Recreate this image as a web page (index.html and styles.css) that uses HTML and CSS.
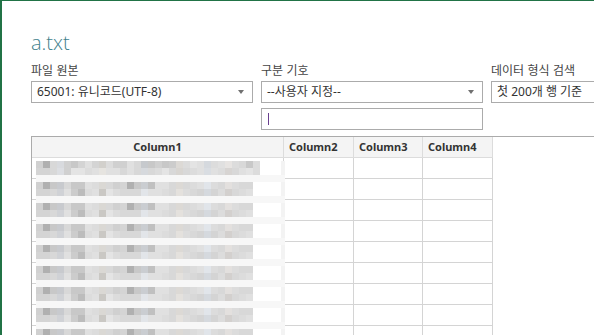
FILE: index.html
```html
<!DOCTYPE html>
<html lang="ko">
<head>
<meta charset="utf-8">
<title>a.txt</title>
<link rel="stylesheet" href="styles.css">
</head>
<body>
<div class="frame">
  <h1 class="title">a.txt</h1>
  <div class="fields">
    <div class="field">
      <div class="label">파일 원본</div>
      <div class="select"><span class="value">65001: 유니코드(UTF-8)</span><span class="arrow"></span></div>
    </div>
    <div class="field">
      <div class="label">구분 기호</div>
      <div class="select"><span class="value">--사용자 지정--</span><span class="arrow"></span></div>
      <div class="input"><span class="caret"></span></div>
    </div>
    <div class="field">
      <div class="label">데이터 형식 검색</div>
      <div class="select"><span class="value">첫 200개 행 기준</span></div>
    </div>
  </div>
  <div class="grid-wrap">
    <div class="grid" id="grid">
      <div class="hcell center">Column1</div>
      <div class="hcell">Column2</div>
      <div class="hcell">Column3</div>
      <div class="hcell">Column4</div>
    </div>
    <div class="blur" id="blur"></div>
  </div>
</div>
<script src="script.js"></script>
</body>
</html>
```

FILE: styles.css
```css
* { box-sizing: border-box; }
html, body { margin: 0; padding: 0; background: #fff; overflow: hidden; }
body {
  width: 594px;
  height: 335px;
  font-family: "Noto Sans", "Noto Sans CJK KR", sans-serif;
  color: #444;
}
.frame {
  height: 335px;
  border-left: 2px solid #217346;
  border-top: 1px solid #217346;
  padding: 0 0 0 29px;
  overflow: hidden;
}
.title {
  margin: 0 0 2px;
  padding-top: 27px;
  font-size: 20px;
  line-height: 30px;
  font-weight: 300;
  color: #3f7f8c;
  font-family: "Open Sans", "Noto Sans", sans-serif;
}
.fields {
  display: flex;
  gap: 8px;
  white-space: nowrap;
}
.field {
  width: 222px;
  flex: none;
  display: flex;
  flex-direction: column;
}
.label {
  font-size: 12px;
  line-height: 16px;
  height: 18px;
  padding-top: 2px;
  margin-bottom: 3px;
  color: #444;
  font-family: "Noto Sans CJK KR", "Noto Sans", sans-serif;
}
.select, .input {
  height: 22px;
  border: 1px solid #ababab;
  display: flex;
  align-items: center;
  padding: 0 8px 0 5px;
  font-size: 12px;
  color: #333;
  font-family: "Noto Sans", "Noto Sans CJK KR", sans-serif;
}
.select .value { flex: 1; line-height: 20px; }
.arrow {
  width: 0; height: 0;
  border-left: 3.5px solid transparent;
  border-right: 3.5px solid transparent;
  border-top: 4px solid #707070;
}
.input { margin-top: 5px; padding-left: 6px; }
.caret {
  width: 1px;
  height: 12px;
  background: #6a3f8f;
}
.grid-wrap {
  position: relative;
  margin-top: 6px;
  margin-right: -10px;
  border-top: 1px solid #ababab;
  border-left: 1px solid #ababab;
  height: 200px;
}
.grid {
  display: grid;
  grid-template-columns: 252px 70px 69px 70px;
  grid-auto-rows: 21px;
  width: 461px;
}
.hcell, .cell {
  border-right: 1px solid #d4d4d4;
  border-bottom: 1px solid #d4d4d4;
}
.hcell {
  background: #f4f4f4;
  font-size: 11px;
  font-weight: 700;
  color: #333;
  line-height: 20px;
  padding-left: 5px;
  border-color: #dcdcdc;
}
.hcell.center { text-align: center; padding-left: 0; }
.blur {
  position: absolute;
  left: 4px;
  top: 24px;
  width: 249px;
  display: flex;
  flex-direction: column;
}
.brow {
  height: 21px;
  display: flex;
  flex-direction: column;
  background: linear-gradient(to right, transparent 245px, #f3f3f3 245px);
}
.bline { height: 7px; display: flex; }
.bgap { height: 7px; background: #f7f7f7; }
.blk { width: 7px; height: 7px; flex: none; }
```

FILE: script.js
```js
(function () {
  var grid = document.getElementById('grid');
  for (var r = 0; r < 9; r++) {
    for (var c = 0; c < 4; c++) {
      var d = document.createElement('div');
      d.className = 'cell';
      grid.appendChild(d);
    }
  }
  var top1 = ['d0','b0','d8','d8','d0','c8','d4','e0','d4','d0','dc','d0','d0','e0','d8','c8','c8','d0','c8','cc','d8','dc','e4','e0','d8','dc','e0','e4','dc','d8','c8','dc'];
  var bot1 = ['d4','d4','d8','dc','d0','e4','e4','dc','e0','e4','e0','e0','d8','e0','d8','d8','d8','dc','e4','d8','d4','d8','dc','e0','dc','e0','dc','d4','d8','e0','e4','dc'];
  var top2 = ['d0','b0','c8','c8','d8','c8','c8','e0','dc','d8','d8','d0','d4','b0','c8','cc','c0','e0','e0','d8','d8','d8','dc','e0','e4','dc','d8','e0','dc','d8','d8'];
  var bot2 = ['d4','d4','d8','d0','e0','cc','bc','dc','e0','c8','e4','dc','d8','d8','d8','e4','e0','e0','dc','d8','e0','dc','d8','d4','d8','d4','dc','d0','d8','dc','e0'];
  var tint = {3:[0,2,6],9:[2,0,-4],15:[-2,1,5],20:[4,1,-3],24:[-3,1,6],27:[3,0,-2]};
  function col(h, i) {
    var v = parseInt(h, 16);
    var t = tint[i] || [0,0,0];
    return 'rgb(' + (v + t[0]) + ',' + (v + t[1]) + ',' + (v + t[2]) + ')';
  }
  var blur = document.getElementById('blur');
  for (var k = 0; k < 9; k++) {
    var tp = k === 0 ? top1 : top2;
    var bt = k === 0 ? bot1 : bot2;
    var row = document.createElement('div');
    row.className = 'brow';
    [tp, bt].forEach(function (arr) {
      var line = document.createElement('div');
      line.className = 'bline';
      arr.forEach(function (h, i) {
        var b = document.createElement('span');
        b.className = 'blk';
        b.style.background = col(h, i);
        line.appendChild(b);
      });
      row.appendChild(line);
    });
    var gap = document.createElement('div');
    gap.className = 'bgap';
    row.appendChild(gap);
    blur.appendChild(row);
  }
})();
```
